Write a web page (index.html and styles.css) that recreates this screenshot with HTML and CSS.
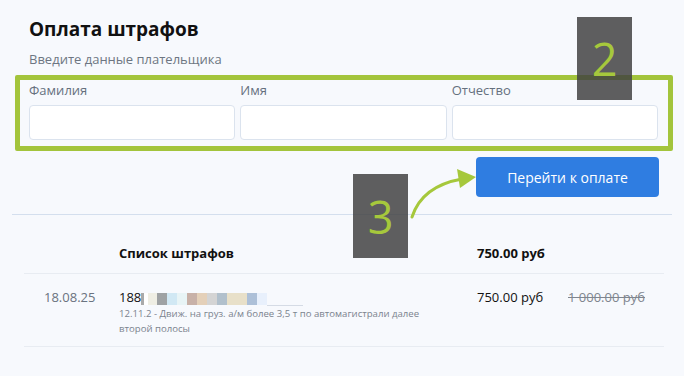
FILE: index.html
```html
<!DOCTYPE html>
<html lang="ru">
<head>
    <meta charset="UTF-8">
    <meta name="viewport" content="width=device-width, initial-scale=1.0">
    <title>Оплата штрафов</title>
    <link rel="stylesheet" href="styles.css">
</head>
<body>

    <div class="page">
        <div class="head">
            <h1>Оплата штрафов</h1>
            <p class="hint">Введите данные плательщика</p>
        </div>

        <div class="payer">
            <label class="field">
                <span class="field-label">Фамилия</span>
                <input type="text" class="field-input">
            </label>
            <label class="field">
                <span class="field-label">Имя</span>
                <input type="text" class="field-input">
            </label>
            <label class="field">
                <span class="field-label">Отчество</span>
                <input type="text" class="field-input">
            </label>
        </div>

        <div class="actions">
            <button class="pay-button">Перейти к оплате</button>
        </div>

        <div class="divider"></div>

        <div class="fines">
            <div class="fines-row fines-head">
                <span></span>
                <span>Список штрафов</span>
                <span>750.00 руб</span>
                <span></span>
            </div>
            <div class="fines-row">
                <span class="fine-date">18.08.25</span>
                <div class="fine-info">
                    <div class="fine-number">188<span class="blur">
                        <i style="background:#a9a9a9;width:3px"></i><i style="background:#fff;width:4px"></i><i style="background:#efeee4;width:9px"></i><i style="background:#9fa2a4"></i><i style="background:#d1e8f4"></i><i style="background:#e8f4f6"></i><i style="background:#c8b1a8"></i><i style="background:#e4d0b9"></i><i style="background:#d4d4d4"></i><i style="background:#b1c0cc"></i><i style="background:#e8e0c9;width:20px"></i><i style="background:#adc0d8"></i><i style="background:#e8f0fc"></i><i class="blur-tail"></i>
                    </span></div>
                    <p class="fine-desc">12.11.2 - Движ. на груз. а/м более 3,5 т по автомагистрали далее второй полосы</p>
                </div>
                <span>750.00 руб</span>
                <span class="fine-old">1 000.00 руб</span>
            </div>
        </div>

        <div class="mark mark-two">2</div>
        <div class="mark mark-three">3</div>
        <svg class="arrow" width="684" height="376" viewBox="0 0 684 376">
            <path d="M412 217 Q422 186 462 179" fill="none" stroke="#a6c83c" stroke-width="3" stroke-linecap="round"/>
            <polygon points="476,177 457,169 460,188" fill="#a6c83c"/>
        </svg>
    </div>

</body>
</html>
```

FILE: styles.css
```css
body {
    margin: 0;
    background-color: #f7f9fd;
    font-family: "Open Sans", Arial, sans-serif;
    color: #111;
}
.page {
    position: relative;
    padding: 0 12px;
    height: 376px;
}
.head {
    padding: 16px 0 0 17px;
}
h1 {
    margin: 0;
    font-size: 19px;
    line-height: 26px;
    font-weight: 700;
    color: #111;
}
.hint {
    margin: 9px 0 0;
    font-size: 13px;
    line-height: 16px;
    color: #6d7682;
}
.payer {
    display: grid;
    grid-template-columns: repeat(3, 1fr);
    column-gap: 5px;
    margin: 8px -1px 0 3px;
    padding: 1px 10px 6px 9px;
    border: 5px solid #a3c43c;
    border-radius: 2px;
}
.field {
    display: flex;
    flex-direction: column;
}
.field-label {
    font-size: 13px;
    line-height: 18px;
    color: #65707e;
    margin-bottom: 6px;
}
.field-input {
    height: 35px;
    box-sizing: border-box;
    border: 1px solid #dbe3ee;
    border-radius: 4px;
    background: #fff;
}
.actions {
    display: flex;
    justify-content: flex-end;
    padding: 6px 13px 0 0;
}
.pay-button {
    width: 183px;
    height: 40px;
    border: none;
    border-radius: 4px;
    background-color: #2f7de1;
    color: #fff;
    font-family: inherit;
    font-size: 14px;
    cursor: pointer;
}
.divider {
    margin-top: 17px;
    height: 1px;
    background: #d4dfee;
}
.fines {
    margin: 0 8px 0 12px;
}
.fines-row {
    display: grid;
    grid-template-columns: 95px 358px 91px 1fr;
    padding: 14px 0 10px;
    border-bottom: 1px solid #e8ecf2;
    font-size: 13px;
    line-height: 18px;
}
.fines-head {
    padding: 29px 0 11px;
    font-weight: 700;
}
.fine-date {
    padding-left: 20px;
    color: #6a7380;
}
.fine-number {
    display: flex;
    align-items: center;
}
.blur {
    display: inline-flex;
    height: 12px;
    margin-top: 3px;
}
.blur i {
    display: block;
    width: 10px;
    height: 12px;
}
.blur .blur-tail {
    width: 36px;
    border-bottom: 1px solid #d5dbe5;
}
.fine-desc {
    margin: 0;
    font-size: 9.6px;
    line-height: 15px;
    color: #7b838e;
    max-width: 310px;
}
.fine-old {
    color: #80868f;
    text-decoration: line-through;
}
.mark {
    position: absolute;
    display: flex;
    align-items: center;
    justify-content: center;
    width: 55px;
    height: 83px;
    background: rgba(64, 64, 64, 0.84);
    color: #a6c83c;
    font-size: 45px;
    line-height: 1;
}
.mark-two {
    left: 577px;
    top: 17px;
}
.mark-three {
    left: 353px;
    top: 174px;
    height: 84px;
}
.arrow {
    position: absolute;
    left: 0;
    top: 0;
    pointer-events: none;
}
```
